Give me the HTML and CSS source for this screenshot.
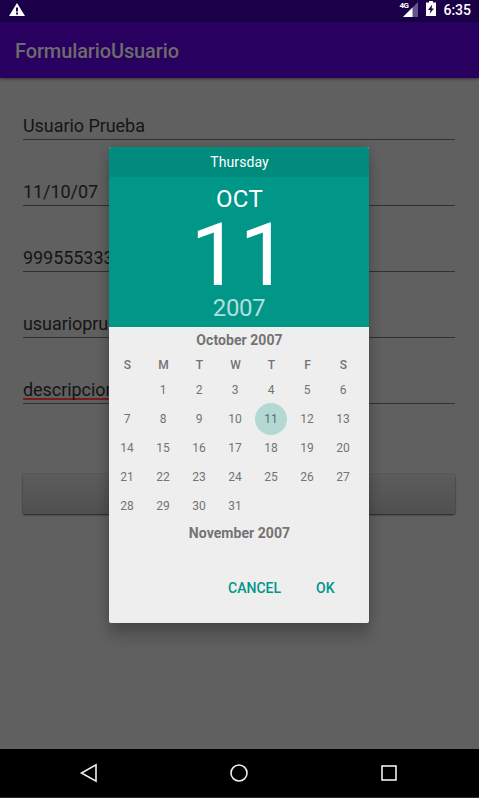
FILE: index.html
```html
<!DOCTYPE html>
<html lang="es">
<head>
<meta charset="utf-8">
<title>FormularioUsuario</title>
<link rel="stylesheet" href="styles.css">
</head>
<body>
<div class="screen">
  <header class="status">
    <svg class="warn" width="16" height="14" viewBox="0 0 16 14"><path fill="#fff" fill-rule="evenodd" d="M8 0 16 13H0ZM7 4.500v4h2v-4ZM7 9.500v2h2v-2Z"/></svg>
    <div class="status-right">
      <div class="signal"><span class="net">4G</span><svg width="15" height="15" viewBox="0 0 15 15"><path fill="#66558a" d="M15 0V15H0Z"/><path fill="#fff" d="M9.500 5.500V15H0Z"/></svg></div>
      <svg class="battery" width="10" height="15" viewBox="0 0 10 15"><path fill="#fff" fill-rule="evenodd" d="M3 0h4v1.500h3V15H0V1.500h3ZM6.200 3.500 2 9h2.500l-.8 3.800L8 7.500H5.600Z"/></svg>
      <span class="clock">6:35</span>
    </div>
  </header>
  <div class="appbar">FormularioUsuario</div>
  <main class="form">
    <div class="field">Usuario Prueba</div>
    <div class="field">11/10/07</div>
    <div class="field">999555333</div>
    <div class="field">usuarioprueba</div>
    <div class="field"><span class="typo">descripcion</span></div>
    <div class="submit"></div>
  </main>
  <nav class="nav">
    <svg width="20" height="20" viewBox="0 0 20 20"><path d="M17 1.800V18.200L2.500 10Z"/></svg>
    <svg width="20" height="20" viewBox="0 0 20 20"><circle cx="10" cy="10" r="8"/></svg>
    <svg width="20" height="20" viewBox="0 0 20 20"><rect x="3" y="3" width="14" height="14"/></svg>
  </nav>
</div>
<div class="dialog">
  <div class="weekday">Thursday</div>
  <div class="date">
    <div class="month">OCT</div>
    <div class="day">11</div>
    <div class="year">2007</div>
  </div>
  <div class="caption">October 2007</div>
  <div class="grid names"><span>S</span><span>M</span><span>T</span><span>W</span><span>T</span><span>F</span><span>S</span></div>
  <div class="grid days">
    <span></span><span>1</span><span>2</span><span>3</span><span>4</span><span>5</span><span>6</span>
    <span>7</span><span>8</span><span>9</span><span>10</span><span class="selected">11</span><span>12</span><span>13</span>
    <span>14</span><span>15</span><span>16</span><span>17</span><span>18</span><span>19</span><span>20</span>
    <span>21</span><span>22</span><span>23</span><span>24</span><span>25</span><span>26</span><span>27</span>
    <span>28</span><span>29</span><span>30</span><span>31</span>
  </div>
  <div class="caption next">November 2007</div>
  <div class="actions"><span>CANCEL</span><span>OK</span></div>
</div>
</body>
</html>
```
FILE: styles.css
```css
* { box-sizing: border-box; }
body { margin: 0; font-family: Roboto, sans-serif; overflow: hidden; }
svg { display: block; }
.screen { width: 479px; height: 798px; background: #606060; display: flex; flex-direction: column; }
.status { height: 22px; flex: none; background: #190048; display: flex; justify-content: space-between; padding: 0 8px 0 9px; }
.warn { margin-top: 3px; }
.status-right { display: flex; color: #fff; }
.signal { display: flex; padding-top: 2px; }
.signal svg { margin-left: -5px; }
.net { font-size: 8px; line-height: 8px; font-weight: 700; letter-spacing: -.6px; }
.battery { margin: 1px 0 0 8px; }
.clock { font-size: 14px; font-weight: 500; line-height: 20px; margin-left: 7px; }
.appbar { height: 56px; flex: none; background: #28005f; color: #6c6c6c; font-size: 20px; font-weight: 500; line-height: 58px; padding-left: 15px; letter-spacing: -.12px; box-shadow: 0 1px 3px rgba(0,0,0,.45); }
.form { flex: 1; padding: 34px 24px 0 23px; }
.field { height: 28px; margin-bottom: 38px; border-bottom: 1px solid #313131; font-size: 18px; line-height: 28px; letter-spacing: -.06px; color: #151515; white-space: nowrap; }
.typo { display: block; width: 100px; height: 24px; border-bottom: 2px solid #7b1c1c; line-height: 28px; }
.submit { height: 40px; margin-top: 70px; border-radius: 2px; background: linear-gradient(#5c5c5c, #505050); box-shadow: 0 1px 2px rgba(0,0,0,.65), 0 0 1px rgba(0,0,0,.4); }
.nav { height: 49px; flex: none; background: #000; border-bottom: 1px solid #292929; display: flex; justify-content: space-between; align-items: center; padding: 0 80px 0 79px; }
.nav svg { fill: none; stroke: #eee; stroke-width: 1.6; }
.dialog { position: absolute; left: 109px; top: 147px; width: 260px; height: 476px; background: #eee; border-radius: 2px; overflow: hidden; box-shadow: 0 14px 14px rgba(0,0,0,.18), 0 0 12px rgba(0,0,0,.16); color: #737373; text-align: center; }
.weekday { height: 30px; background: #008b7d; color: #fff; font-size: 14px; line-height: 30px; letter-spacing: .08px; padding-left: 1px; }
.date { height: 150px; background: #009688; color: #fff; padding-top: 7px; }
.month { font-size: 24px; line-height: 30px; letter-spacing: .3px; padding-left: 1px; }
.day { font-size: 88px; line-height: 80px; padding: 1px 0 0 1px; height: 80px; letter-spacing: -.5px; }
.year { font-size: 24px; line-height: 28px; letter-spacing: -.4px; color: #b2dfdb; }
.caption { height: 26px; font-size: 14px; font-weight: 700; line-height: 27px; letter-spacing: .06px; padding-left: 1px; }
.grid { display: grid; grid-template-columns: repeat(7, 36px); font-size: 12px; }
.names { height: 22px; line-height: 24px; font-weight: 500; padding-left: .5px; }
.days { grid-auto-rows: 29px; line-height: 29px; margin-top: 1px; }
.selected { width: 32px; height: 32px; margin: -2px 2px -1px; border-radius: 50%; background: #b4d8d4; line-height: 33px; color: #55706d; }
.next { margin-top: -1px; }
.actions { display: flex; justify-content: flex-end; gap: 35px; padding: 32px 34.500px 0 0; color: #009688; font-size: 14px; font-weight: 500; line-height: 20px; }
```
